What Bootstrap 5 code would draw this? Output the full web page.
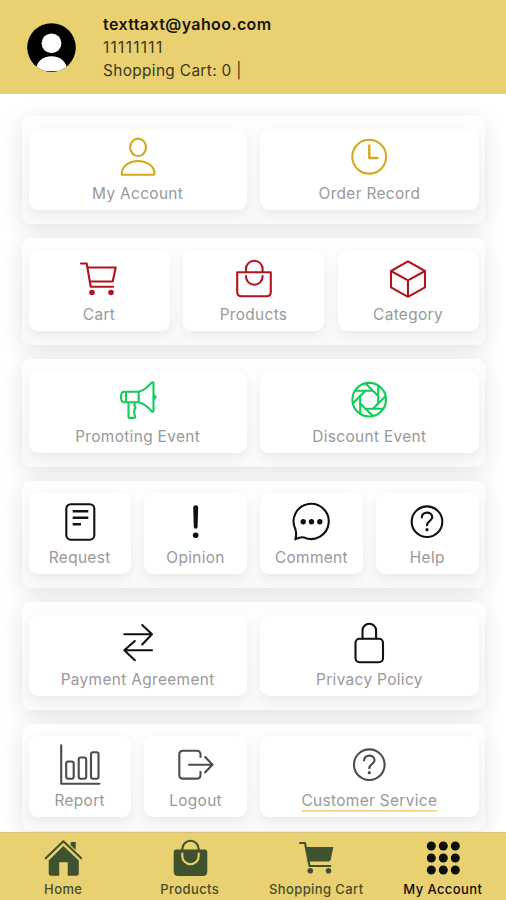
<!DOCTYPE html>
<html lang="en">
<head>
<meta charset="utf-8">
<meta name="viewport" content="width=device-width, initial-scale=1">
<title>My Account</title>
<link href="https://cdn.jsdelivr.net/npm/bootstrap@5.3.0/dist/css/bootstrap.min.css" rel="stylesheet">
<style>
  body { font-family: Inter, "Liberation Sans", sans-serif; background: #fff; }
  .top-bar { background: #e9d172; height: 94px; padding-left: 27px; color: #3b3720; }
  .user-info { margin-left: 27px; font-size: 15.4px; line-height: 23px; letter-spacing: .35px; padding-top: 1px; }
  .user-mail { color: #17150b; font-weight: 600; font-size: 16px; letter-spacing: .4px; }
  .user-num { letter-spacing: 1.3px; }
  .menu-area { padding: 22px 21px 0 22px; }
  .panel { height: 107.5px; padding: 12.5px 6.5px 14px; margin-bottom: 14px; border-radius: 9px;
           background: linear-gradient(#fefefe, #f9f9f9); box-shadow: 0 5px 22px rgba(0,0,0,.115); }
  .tiles { display: grid; gap: 13.5px; height: 81px; }
  .tiles-2 { grid-template-columns: 1fr 1fr; }
  .tiles-3 { grid-template-columns: 1fr 1fr 1fr; }
  .tiles-4 { grid-template-columns: repeat(4, 1fr); }
  .tiles-wide-end { grid-template-columns: repeat(4, 1fr); }
  .tiles-wide-end > :last-child { grid-column: span 2; }
  .tile { background: #fff; border-radius: 9px; box-shadow: 0 4px 12px rgba(0,0,0,.065); padding-top: 8.5px;
          color: #999; font-size: 15.4px; line-height: 20px; letter-spacing: .35px; min-width: 0; }
  .tile svg, .tab svg { width: 40px; height: 40px; overflow: visible; fill: none; stroke: currentColor;
          stroke-width: 2.1; stroke-linecap: round; stroke-linejoin: round; flex: none; }
  .tile span { margin-top: 6.6px; white-space: nowrap; }
  .tile .solid, .tab .solid { fill: currentColor; stroke: none; }
  .gold { color: #d2a91f; } .red { color: #b2141f; } .green { color: #12cb58; }
  .ink { color: #111; } .slate { color: #4c4c4e; }
  .tile .service { box-shadow: 0 1.5px 0 #f0d27e; height: 18.5px; }
  .tab-bar { background: #e9d172; height: 68px; border-top: 1px solid #d6c47c; z-index: 2; }
  .tab { color: #464e2c; font-size: 13px; line-height: 16px; letter-spacing: .4px; padding-top: 5px; white-space: nowrap; font-weight: 500; }
  .tab svg { color: #3f5230; }
  .tab span { margin-top: 3px; }
  .tab.current, .tab.current svg { color: #0c0f0a; }
  .tab .cut { stroke: #e9d172; }
</style>
<script src="https://cdn.jsdelivr.net/npm/bootstrap@5.3.0/dist/js/bootstrap.bundle.min.js"></script>
</head>
<body class="vh-100 overflow-hidden d-flex flex-column">
<header class="top-bar d-flex align-items-center flex-shrink-0">
  <svg width="49" height="49" viewBox="0 0 49 49">
    <defs><clipPath id="disc"><circle cx="24.5" cy="24.5" r="24.3"/></clipPath></defs>
    <circle cx="24.5" cy="24.5" r="24.3" fill="#000"/>
    <g fill="#fff" clip-path="url(#disc)"><circle cx="24.5" cy="20.3" r="9.9"/><path d="M9 48C9 38 16 33.2 24.5 33.2S40 38 40 48Z"/></g>
  </svg>
  <div class="user-info">
    <div class="user-mail"><span>texttaxt@yahoo.com</span></div>
    <div><span class="user-num">11111111</span></div>
    <div><span>Shopping Cart: 0 |</span></div>
  </div>
</header>

<main class="menu-area flex-grow-1 overflow-hidden">
  <section class="panel"><div class="tiles tiles-2">
    <div class="tile d-flex flex-column align-items-center">
      <svg class="gold" viewBox="0 0 40 40"><ellipse cx="20.1" cy="10.3" rx="7.9" ry="8.7"/><path d="M4 37.7Q3.6 37.7 4 34.5C5.5 28 12 24 20.1 24S34.900 28 36.400 34.500Q36.800 37.700 36 37.700Z"/></svg>
      <span>My Account</span></div>
    <div class="tile d-flex flex-column align-items-center">
      <svg class="gold" viewBox="0 0 40 40"><circle cx="20.200" cy="19.700" r="16.900"/><path stroke-width="2.400" d="M20.300 8.500V21H28.500"/></svg>
      <span>Order Record</span></div>
  </div></section>

  <section class="panel"><div class="tiles tiles-3">
    <div class="tile d-flex flex-column align-items-center">
      <svg class="red" viewBox="0 0 40 40"><path d="M2 4.500H7.700L11.700 27.700H34M8.500 8.500H36.700L33.700 22.500H10.800"/><g class="solid"><circle cx="13" cy="33.500" r="2.800"/><circle cx="32" cy="33.500" r="2.800"/></g></svg>
      <span>Cart</span></div>
    <div class="tile d-flex flex-column align-items-center">
      <svg class="red" viewBox="0 0 40 40"><path d="M3.200 13.200H36.800V33Q36.800 37.300 32.500 37.300H7.500Q3.200 37.300 3.200 33ZM12 12.500V10A8.300 8.300 0 0 1 28.600 10V12.500M12 17V17.500A8.300 8.300 0 0 0 28.600 17.500V17"/></svg>
      <span>Products</span></div>
    <div class="tile d-flex flex-column align-items-center">
      <svg class="red" viewBox="0 0 40 40"><path d="M20 2.300L37 12V28.300L20 37.800L3 28.300V12ZM3 12L20 21.300L37 12M20 21.300V37.800"/></svg>
      <span>Category</span></div>
  </div></section>

  <section class="panel"><div class="tiles tiles-2">
    <div class="tile d-flex flex-column align-items-center">
      <svg class="green" viewBox="0 0 40 40"><path d="M20.700 11.700H5.500Q3 12.500 3 17T5.500 22.300H20.700ZM8 11.700V22.300M20.700 11.700Q27.500 10 33.500 2.700Q34.500 1.800 35.500 2.700V31.200Q34.500 32.500 33.500 31.200Q27.500 24 20.700 22.300M36.500 15.700Q38.500 17 36.500 18.700M10.500 22.500V36.500Q10.500 38 12 38H16Q17.800 37.500 16.800 35.500Q15.800 33 16.200 30.500L17.500 27.500Q15.500 25.500 17 22.500"/></svg>
      <span>Promoting Event</span></div>
    <div class="tile d-flex flex-column align-items-center">
      <svg class="green" viewBox="-20.200 -19.700 40 40"><defs><path id="blade" d="M-14 -9H3.700"/></defs><circle r="16.800"/>
        <use href="#blade"/><use href="#blade" transform="rotate(45)"/><use href="#blade" transform="rotate(90)"/><use href="#blade" transform="rotate(135)"/><use href="#blade" transform="rotate(180)"/><use href="#blade" transform="rotate(225)"/><use href="#blade" transform="rotate(270)"/><use href="#blade" transform="rotate(315)"/></svg>
      <span>Discount Event</span></div>
  </div></section>

  <section class="panel"><div class="tiles tiles-4">
    <div class="tile d-flex flex-column align-items-center">
      <svg class="ink" viewBox="0 0 40 40"><rect x="6.300" y="2.200" width="28" height="35.500" rx="4.500"/><path stroke-linecap="butt" stroke-width="2.400" d="M12.700 9.200H28.300M12.700 15.700H28.300M12.700 22.200H21"/></svg>
      <span>Request</span></div>
    <div class="tile d-flex flex-column align-items-center">
      <svg class="ink" viewBox="0 0 40 40"><g class="solid"><path d="M17.200 5.500Q17.200 3.300 19.700 3.300T22.200 5.500L21.600 25Q21.400 26.800 19.700 26.800T17.800 25Z"/><circle cx="19.700" cy="33.300" r="2.800"/></g></svg>
      <span>Opinion</span></div>
    <div class="tile d-flex flex-column align-items-center">
      <svg class="ink" viewBox="0 0 40 40"><path d="M4.300 37.300Q6 32 4.300 27A17.600 17.600 0 1 1 13.300 35.600Q10 34.500 4.300 37.300Z"/><g class="solid"><circle cx="12.200" cy="19.800" r="2.700"/><circle cx="20.500" cy="19.800" r="2.700"/><circle cx="28.800" cy="19.800" r="2.700"/></g></svg>
      <span>Comment</span></div>
    <div class="tile d-flex flex-column align-items-center">
      <svg class="ink" viewBox="0 0 40 40"><circle cx="20" cy="19.700" r="15.300"/><path d="M14.800 15.500C14.500 9 25.300 9 25.300 15.300C25.300 18.800 20 19 20 23.300"/><circle class="solid" cx="20" cy="27.700" r="1.600"/></svg>
      <span>Help</span></div>
  </div></section>

  <section class="panel"><div class="tiles tiles-2">
    <div class="tile d-flex flex-column align-items-center">
      <svg class="ink" viewBox="0 0 40 40"><path d="M6.300 11.300H34M24.200 2L34 11.300L24.200 21.500M34 27.300H6.300M16.800 18L6.300 27.300L16.800 37.200"/></svg>
      <span>Payment Agreement</span></div>
    <div class="tile d-flex flex-column align-items-center">
      <svg class="ink" viewBox="0 0 40 40"><rect x="6.500" y="15.700" width="27.500" height="23.600" rx="4"/><path d="M13.500 15.700V7.500A6.800 6.800 0 0 1 27.100 7.500V15.700"/></svg>
      <span>Privacy Policy</span></div>
  </div></section>

  <section class="panel"><div class="tiles tiles-wide-end">
    <div class="tile d-flex flex-column align-items-center">
      <svg class="slate" viewBox="0 0 40 40"><path d="M1.200 .3V38.800H39.500"/><rect x="6.200" y="16.500" width="7.500" height="17.200" rx="2"/><rect x="18.700" y="12.500" width="7.500" height="21.200" rx="2"/><rect x="31" y="7.300" width="7.500" height="26.400" rx="2"/></svg>
      <span>Report</span></div>
    <div class="tile d-flex flex-column align-items-center">
      <svg class="slate" viewBox="0 0 40 40"><path d="M24.500 12V9.500Q24.500 5.700 20.700 5.700H7Q3.300 5.700 3.300 9.500V29.700Q3.300 33.600 7 33.600H20.700Q24.500 33.600 24.500 29.700V26.800M13 19.700H36.500M29.200 12L36.500 19.700L29.200 27.300"/></svg>
      <span>Logout</span></div>
    <div class="tile d-flex flex-column align-items-center">
      <svg class="slate" viewBox="0 0 40 40"><circle cx="20.300" cy="19.700" r="15.300"/><path d="M15.100 15.500C14.800 9 25.600 9 25.600 15.300C25.600 18.800 20.300 19 20.300 23.300"/><circle class="solid" cx="20.300" cy="27.700" r="1.600"/></svg>
      <span class="service">Customer Service</span></div>
  </div></section>
</main>

<nav class="tab-bar row g-0 flex-shrink-0">
  <div class="tab col-3 d-flex flex-column align-items-center">
    <svg viewBox="0 0 40 40"><path d="M2.700 20.300L20.400 3.300L38.200 20.300"/><path class="solid" d="M27.700 4H32.700V12L27.700 7.500ZM20.400 8L35.800 22.500V35.500Q35.800 37.700 33.500 37.700H24.700V24.300H16.200V37.700H8Q5.700 37.700 5.700 35.500V22.500Z"/></svg>
    <span>Home</span></div>
  <div class="tab col-3 d-flex flex-column align-items-center">
    <svg viewBox="0 0 40 40"><path class="solid" d="M6 11.500H35Q37.300 11.500 37.300 14V33.500Q37.300 38 32.800 38H8.200Q3.700 38 3.700 33.500V14Q3.700 11.500 6 11.500Z"/><path d="M12.300 13V11A8.200 8.200 0 0 1 28.700 11V13"/><path class="cut" d="M12.300 15.500V18A8.200 8.200 0 0 0 28.700 18V15.500"/></svg>
    <span>Products</span></div>
  <div class="tab col-3 d-flex flex-column align-items-center">
    <svg viewBox="0 0 40 40"><path d="M4 5H9L13.500 28H34.300"/><path class="solid" d="M9.500 9H37.300L34.800 21.500Q34.500 23.500 32.500 23.500H12.300Z"/><g class="solid"><circle cx="14.300" cy="32.700" r="2.800"/><circle cx="32.500" cy="32.700" r="2.800"/></g></svg>
    <span>Shopping Cart</span></div>
  <div class="tab current col-3 d-flex flex-column align-items-center">
    <svg viewBox="0 0 40 40"><g class="solid"><circle cx="8.300" cy="8" r="4.500"/><circle cx="20.300" cy="8" r="4.500"/><circle cx="32.300" cy="8" r="4.500"/><circle cx="8.300" cy="20" r="4.500"/><circle cx="20.300" cy="20" r="4.500"/><circle cx="32.300" cy="20" r="4.500"/><circle cx="8.300" cy="32" r="4.500"/><circle cx="20.300" cy="32" r="4.500"/><circle cx="32.300" cy="32" r="4.500"/></g></svg>
    <span>My Account</span></div>
</nav>
</body>
</html>
